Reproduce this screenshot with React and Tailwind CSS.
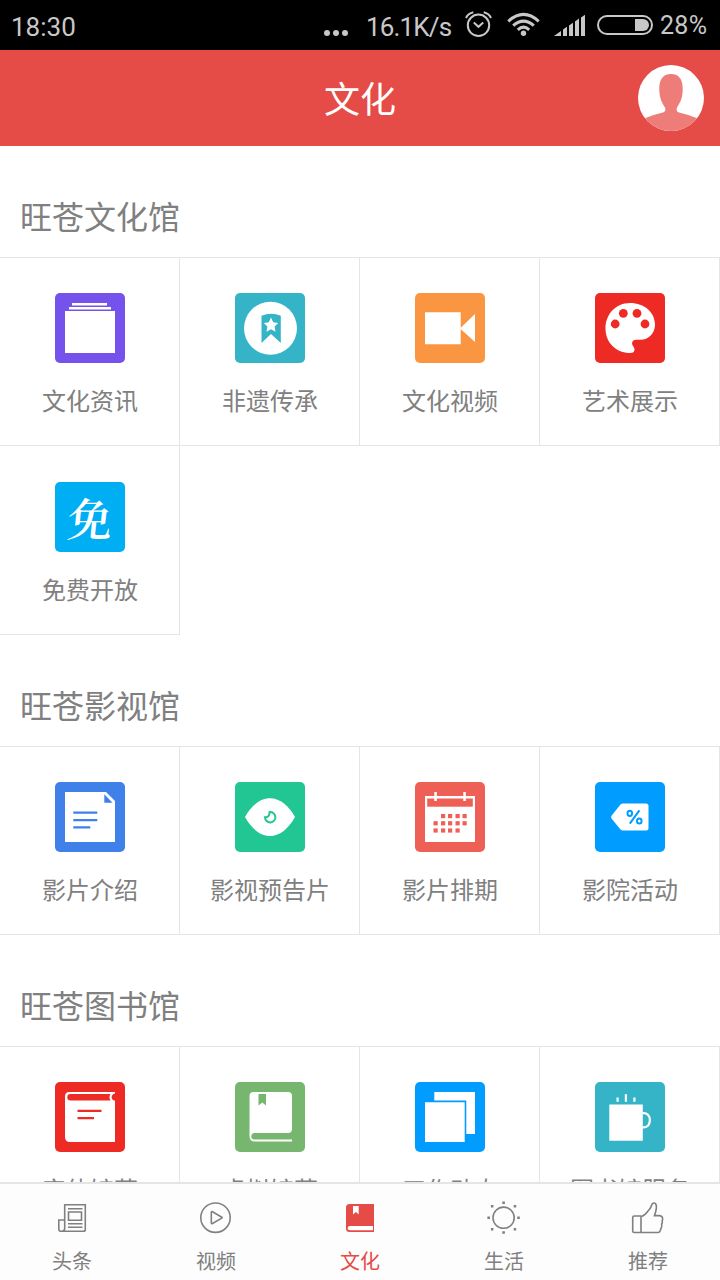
import React from "react";

const Tile = ({ className, children }) => (
  <svg viewBox="0 0 70 70" className={`size-[70px] rounded-[5px] ${className}`} fill="#fff">
    {children}
  </svg>
);

const NewsTile = () => (
  <Tile className="bg-[#7552eb]">
    <rect x="17" y="10" width="35" height="2.5" />
    <rect x="14" y="14" width="42" height="2.5" />
    <rect x="10" y="18" width="50" height="42" />
  </Tile>
);

const HeritageTile = () => (
  <Tile className="bg-[#34b4c6] text-[#34b4c6]">
    <circle cx="35.5" cy="35.3" r="26.5" />
    <path d="M26.5 22.8Q36 18.8 45.8 22.8V50L36 41 26.5 50Z" fill="currentColor" />
    <path d="m36 24.600 2.200 4.700 4.900.6-3.500 3.600.9 5.200-4.500-2.500-4.500 2.500.9-5.200-3.500-3.600 4.900-.6Z" />
  </Tile>
);

const VideoTile = () => (
  <Tile className="bg-[#fa9642]">
    <path d="M10 19.300h35.700v32H10ZM60 21v28L45 35.500Z" />
  </Tile>
);

const ArtTile = () => (
  <Tile className="bg-[#ed2a24] text-[#ed2a24]">
    <path d="M35 10C49.500 10 60 19.500 60 31.500C60 40.500 53.500 46.800 45.500 46.800H41C37.500 46.800 36 50 38 53C40.800 56.500 39.500 60 35.500 60C21 60 10.500 49.500 10.500 35.500C10.500 21 21 10 35 10Z" />
    <g fill="currentColor">
      <circle cx="28.3" cy="20.3" r="4.4" />
      <circle cx="42" cy="20.3" r="4.4" />
      <circle cx="20.2" cy="31" r="4.4" />
      <circle cx="50" cy="31" r="4.4" />
    </g>
  </Tile>
);

const FreeTile = () => (
  <div className="flex size-[70px] items-center justify-center rounded-[5px] bg-[#00aef3] pl-0.5 font-['Noto_Serif_CJK_SC','Noto_Sans_CJK_SC',serif] text-[45px] leading-none font-semibold text-white">
    <span className="-translate-y-px -skew-x-6">免</span>
  </div>
);

const DocTile = () => (
  <Tile className="bg-[#3f80e9] text-[#3f80e9]">
    <path d="M10 10h41l9 9v41H10Z" />
    <path d="M49.300 12.300v8.400h8.200ZM18.300 29.600h24v2.200h-24ZM18.300 37h24v2.200h-24ZM18.300 44.200h17v2.200h-17Z" fill="currentColor" />
  </Tile>
);

const EyeTile = () => (
  <Tile className="bg-[#22c693] text-[#22c693]">
    <path d="M10 35C16 24 25 16.300 35 16.300S54 24 60 35C54 46 45 54 35 54S16 46 10 35Z" />
    <path d="M34.600 30.100A5.200 5.200 0 1 1 30 35.300Q34.500 35.600 34.600 30.100Z" fill="none" stroke="currentColor" strokeWidth="2" />
  </Tile>
);

const CALENDAR_DOTS = [
  [26, 32], [33, 32], [40.5, 32], [47.5, 32],
  [18.5, 39.2], [26, 39.2], [33, 39.2], [40.5, 39.2], [47.5, 39.2],
  [18.5, 46.4], [26, 46.4], [33, 46.4], [40.5, 46.4],
];

const CalendarTile = () => (
  <Tile className="bg-[#ee6055] text-[#ee6055]">
    <rect x="10" y="14" width="50" height="46" />
    <rect x="12.2" y="16.5" width="45.6" height="8.2" fill="currentColor" />
    <rect x="19.3" y="10" width="2.5" height="9" />
    <rect x="48.3" y="10" width="2.5" height="9" />
    {CALENDAR_DOTS.map(([x, y]) => (
      <rect key={`${x}-${y}`} x={x} y={y} width="4.2" height="4.2" fill="currentColor" />
    ))}
  </Tile>
);

const CouponTile = () => (
  <Tile className="bg-[#009cff] text-[#009cff]">
    <path d="M28 21.500h23q2.500 0 2.500 2.500v22q0 2.500-2.500 2.500H28Q26.500 48.500 25.500 47.400L16.500 36.500Q15.800 35 16.500 33.700L25.500 22.600Q26.500 21.500 28 21.500Z" />
    <g fill="none" stroke="currentColor" strokeWidth="2">
      <ellipse cx="34.8" cy="31.3" rx="2.3" ry="2.6" />
      <ellipse cx="44.3" cy="39" rx="2.3" ry="2.6" />
      <path d="M44.400 28.300 34.800 41.600" />
    </g>
  </Tile>
);

const BookTile = () => (
  <Tile className="bg-[#ed2a24] text-[#ed2a24]">
    <path d="M14 10H60V60H15Q10 60 10 55V14.500Q10 10 14 10Z" />
    <path d="M15.500 12H55.500Q53.500 15.200 55.500 18.600H15.500Q12.300 18.600 12.300 15.300T15.500 12ZM60 11.500Q56.600 12.500 56.600 15.200T60 18.800ZM22.500 27.700h24v2.200h-24ZM22.500 35h16.500v2.200H22.500Z" fill="currentColor" />
  </Tile>
);

const LibraryTile = () => (
  <Tile className="bg-[#76b66e] text-[#76b66e]">
    <path d="M18.500 10H53Q57 10 57 14V47Q57 51 53 51H19Q16.300 51.500 16.300 54.500T19 57.600H57V59.500H20Q14.500 59.500 14.500 54V14Q14.500 10 18.500 10Z" />
    <path d="M23.500 12h7.500v11.500L27.300 20.500 23.500 23.500Z" fill="currentColor" />
  </Tile>
);

const WorkTile = () => (
  <Tile className="bg-[#009cff]">
    <path d="M19.300 10H60V52H51.300V18.500H19.300ZM10 20.300H49.700V60H10Z" />
  </Tile>
);

const ServiceTile = () => (
  <Tile className="bg-[#34b4c6]">
    <path d="M14.300 22.500h33.500v36.300H14.300ZM21.500 15.500h2.200v4.200h-2.200ZM29.800 12.300H32v7.400h-2.200ZM38.300 15.500h2.200v4.200h-2.200Z" />
    <path d="M47 31.300C57.500 29 57.500 47.500 47 45.200" fill="none" stroke="#fff" strokeWidth="2.2" />
  </Tile>
);

const SECTIONS = [
  {
    title: "旺苍文化馆",
    items: [
      { label: "文化资讯", Icon: NewsTile },
      { label: "非遗传承", Icon: HeritageTile },
      { label: "文化视频", Icon: VideoTile },
      { label: "艺术展示", Icon: ArtTile },
      { label: "免费开放", Icon: FreeTile },
    ],
  },
  {
    title: "旺苍影视馆",
    items: [
      { label: "影片介绍", Icon: DocTile },
      { label: "影视预告片", Icon: EyeTile },
      { label: "影片排期", Icon: CalendarTile },
      { label: "影院活动", Icon: CouponTile },
    ],
  },
  {
    title: "旺苍图书馆",
    items: [
      { label: "实体馆藏", Icon: BookTile },
      { label: "虚拟馆藏", Icon: LibraryTile },
      { label: "工作动态", Icon: WorkTile },
      { label: "图书馆服务", Icon: ServiceTile },
    ],
  },
];

const NavIcon = ({ children }) => (
  <svg viewBox="0 0 36 36" className="size-9" fill="none" stroke="currentColor" strokeWidth="1.6">
    {children}
  </svg>
);

const TABS = [
  {
    label: "头条",
    icon: (
      <NavIcon>
        <path d="M10.700 20V4.700H31.300V29.500Q31.300 31.300 29.500 31.300H7.200Q4.800 31.300 4.800 29V20H10.700V28.500Q10.700 31.300 7.700 31.300M14 8.700H28.500M14 23.700H28.500M14 27.300H28.500" />
        <path d="M14.500 12H27.500V20.300H14.500Z" />
      </NavIcon>
    ),
  },
  {
    label: "视频",
    icon: (
      <NavIcon>
        <circle cx="17.5" cy="17.7" r="14.7" />
        <path d="M13.300 12.500Q13.300 11.300 14.500 11.800L23.800 17.200Q24.500 17.700 23.800 18.200L14.500 23.500Q13.300 24 13.300 22.800Z" />
      </NavIcon>
    ),
  },
  {
    label: "文化",
    active: true,
    icon: (
      <NavIcon>
        <g stroke="none">
          <path d="M7.500 4H32V32H7.500Q4 32 4 28.500V7.500Q4 4 7.500 4Z" fill="currentColor" />
          <path d="M11 6H16.700V14.500L13.900 12 11 14.500ZM8 26H31V30.300H8Q5.600 30.300 5.600 28.200T8 26Z" fill="#fff" />
        </g>
      </NavIcon>
    ),
  },
  {
    label: "生活",
    icon: (
      <NavIcon>
        <circle cx="17.6" cy="17.7" r="10.6" />
        <path
          d="M16.300 2.800h2.600M16.300 32.600h2.600M1.400 17.700h2.600M31.200 17.700h2.600M4.900 6.200h2.500M27.700 6.200h2.500M4.900 29.200h2.500M27.700 29.200h2.500"
          strokeWidth="2.5"
        />
      </NavIcon>
    ),
  },
  {
    label: "推荐",
    icon: (
      <NavIcon>
        <path d="M11 16H4.300Q2.700 16 2.700 17.500V31Q2.700 32.500 4.300 32.500H28Q29.600 32.500 30.200 30.800L31.700 26.500Q32 25 31.500 24.200Q32.700 23 32.200 21Q33 19.500 32.500 18Q32.300 16 29.500 15.600H24.500Q26.800 9 26.300 5.500Q25.800 3 24 3Q22.200 3 21.500 5.500Q20.500 8.800 18 11Q14.500 15.800 11 16.500V32.500" />
      </NavIcon>
    ),
  },
];

const StatusBar = () => (
  <div className="flex h-[50px] items-center bg-black pl-[11px] font-['Roboto','Liberation_Sans',sans-serif] text-[26px] leading-none text-[#c8c8c8]">
    <span className="w-[313px] pt-1">18:30</span>
    <svg viewBox="0 0 24 50" className="h-[50px] w-6" fill="currentColor">
      <circle cx="3" cy="33" r="3" />
      <circle cx="12" cy="33" r="3" />
      <circle cx="21" cy="33" r="3" />
    </svg>
    <span className="ml-[18px] w-[99px] pt-1 tracking-[-0.85px]">16.1K/s</span>
    <svg viewBox="0 0 27 50" className="h-[50px] w-[27px]" fill="none" stroke="currentColor" strokeWidth="2">
      <circle cx="13.5" cy="25.3" r="10.7" />
      <path d="m8.800 22.600 4.700 4.200 4.700-4.200M1 18Q3 13.500 8.300 12.300M26 18Q24 13.500 18.700 12.300" />
    </svg>
    <svg viewBox="0 0 33 50" className="ml-[15px] h-[50px] w-[33px]" fill="none" stroke="currentColor" strokeWidth="3">
      <path d="M1.300 21.300Q16.500 7.500 31.700 21.300M6.200 25.700Q16.500 16.500 26.800 25.700M10.800 29.800Q16.500 24.500 22.200 29.800" />
      <circle cx="16.5" cy="33.2" r="2.7" fill="currentColor" stroke="none" />
    </svg>
    <svg viewBox="0 0 31 50" className="ml-3.5 h-[50px] w-[31px]" fill="currentColor">
      <path d="M0 36 7 31v5ZM9 29.500l4-2.800V36H9ZM15 25.500l4-2.800V36h-4ZM21 21.500l4-3V36h-4ZM27 17.500l4-2.800V36h-4Z" />
    </svg>
    <svg viewBox="0 0 56 50" className="ml-3 h-[50px] w-14" fill="currentColor">
      <rect x="1" y="16" width="54" height="18" rx="9" fill="none" stroke="currentColor" strokeWidth="2" />
      <path d="M38 19H46A6 6 0 0 1 46 31H38Z" />
    </svg>
    <span className="ml-[7px] pt-px text-[25px] tracking-[0.3px]">28%</span>
  </div>
);

const Header = () => (
  <header className="grid h-24 grid-cols-3 items-center bg-[#e54b47] px-4">
    <h1 className="col-start-2 pb-0.5 text-center text-4xl text-white">文化</h1>
    <svg viewBox="0 0 66 66" className="size-[66px] justify-self-end rounded-full bg-white" fill="#ee7c79">
      <path d="M33 9C41.500 9 45 15 44.700 25C44.500 34 41.500 38.500 39 42.500Q37.500 46 41 47.500Q50 49.500 58.500 53L66 66H0L7.500 53Q16 49.500 25 47.500Q28.500 46 27 42.500C24.500 38.500 21.500 34 21.300 25C21 15 24.500 9 33 9Z" />
    </svg>
  </header>
);

const Section = ({ title, items }) => (
  <section>
    <h2 className="flex h-28 items-center border-b border-[#e5e5e5] px-5 pt-[26px] text-[32px]">
      {title}
    </h2>
    <div className="-mt-px grid grid-cols-4">
      {items.map(({ label, Icon }) => (
        <button
          key={label}
          className="flex h-[189px] flex-col items-center gap-[19px] border-r border-b border-[#e5e5e5] pt-9"
        >
          <Icon />
          <span className="pl-px text-2xl leading-9">{label}</span>
        </button>
      ))}
    </div>
  </section>
);

const TabBar = () => (
  <nav className="grid h-[98px] shrink-0 grid-cols-5 border-t-2 border-[#e5e5e5] bg-[#fdfdfd]">
    {TABS.map(({ label, icon, active }) => (
      <button
        key={label}
        className={`flex flex-col items-center gap-[9px] pt-4 text-xl ${active ? "text-[#e54b47]" : "text-[#808080]"}`}
      >
        {icon}
        <span className="leading-8">{label}</span>
      </button>
    ))}
  </nav>
);

export default function App() {
  return (
    <div className="flex h-screen flex-col bg-white font-['Noto_Sans_CJK_SC',sans-serif] text-[#808080]">
      <StatusBar />
      <Header />
      <main className="min-h-0 flex-1 overflow-hidden">
        {SECTIONS.map((section) => (
          <Section key={section.title} {...section} />
        ))}
      </main>
      <TabBar />
    </div>
  );
}
